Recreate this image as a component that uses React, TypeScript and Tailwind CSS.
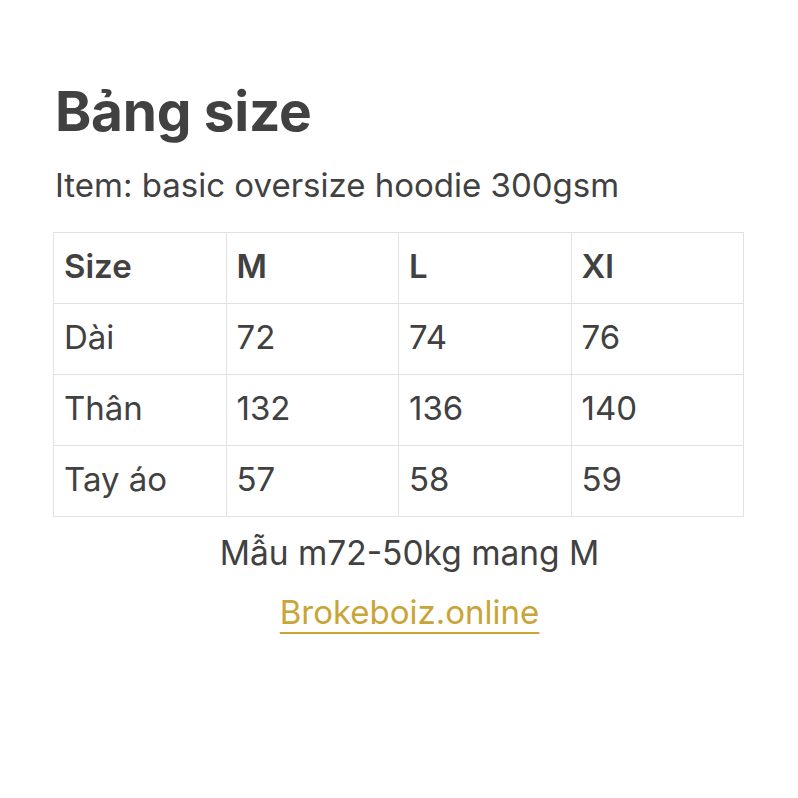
const rows = [
  ["Dài", "72", "74", "76"],
  ["Thân", "132", "136", "140"],
  ["Tay áo", "57", "58", "59"],
];

export default function App() {
  return (
    <div
      className="min-h-[798px] w-[798px] bg-white text-[#414141]"
      style={{ fontFamily: "Inter, 'Noto Sans', sans-serif" }}
    >
      <div className="pl-[53px] pr-[54px] pt-[78px]">
        <h1 className="pl-[2px] text-[55px] leading-[66px] font-bold tracking-[-0.3px]">Bảng size</h1>
        <p className="mt-[20px] pl-[2px] text-[33px] leading-[42px]">Item: basic oversize hoodie 300gsm</p>
        <table className="mt-[26px] w-[691px] table-fixed border-collapse text-[33px]">
          <thead>
            <tr className="h-[71px]">
              {["Size", "M", "L", "Xl"].map((h) => (
                <th key={h} className="border border-[#e2e2e2] px-[10px] pb-[2px] text-left font-semibold">
                  {h}
                </th>
              ))}
            </tr>
          </thead>
          <tbody>
            {rows.map((r) => (
              <tr key={r[0]} className="h-[71px]">
                {r.map((c, i) => (
                  <td key={i} className="border border-[#e2e2e2] px-[10px] pb-[2px]">
                    {c}
                  </td>
                ))}
              </tr>
            ))}
          </tbody>
        </table>
        <div className="mt-[14px] flex flex-col items-center pl-[22px] text-[33.5px]">
          <p className="leading-[44px]">Mẫu m72-50kg mang M</p>
          <a href="#" className="mt-[15px] text-[33px] leading-[44px] text-[#c9a437] underline decoration-[2px] underline-offset-[8px]">
            Brokeboiz.online
          </a>
        </div>
      </div>
    </div>
  );
}
